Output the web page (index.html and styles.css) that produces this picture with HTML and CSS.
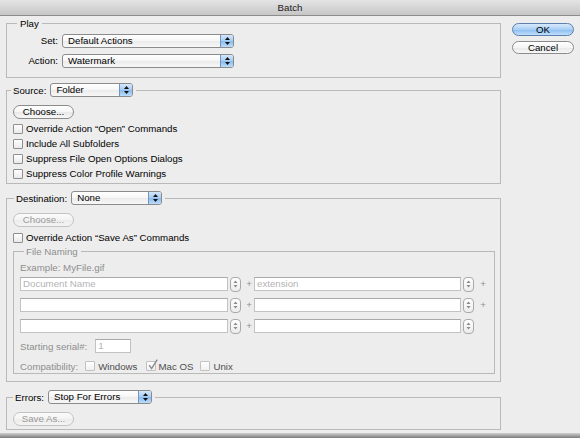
FILE: index.html
```html
<!DOCTYPE html>
<html>
<head>
<meta charset="utf-8">
<title>Batch</title>
<link rel="stylesheet" href="styles.css">
</head>
<body>
<div class="window">
  <div class="titlebar">Batch</div>
  <div class="content">
    <div class="main">
      <fieldset class="group group-play">
        <legend class="legend legend-play">Play</legend>
        <div class="form-grid">
          <span class="label">Set:</span>
          <div class="popup popup-play">
            <span class="popup-text">Default Actions</span>
            <span class="popup-arrows"><svg width="11" height="12" viewBox="0 0 11 12"><polygon points="3,5 8,5 5.5,2" fill="#111"/><polygon points="3,7 8,7 5.5,10" fill="#111"/></svg></span>
          </div>
          <span class="label">Action:</span>
          <div class="popup popup-play">
            <span class="popup-text">Watermark</span>
            <span class="popup-arrows"><svg width="11" height="12" viewBox="0 0 11 12"><polygon points="3,5 8,5 5.5,2" fill="#111"/><polygon points="3,7 8,7 5.5,10" fill="#111"/></svg></span>
          </div>
        </div>
      </fieldset>

      <fieldset class="group group-source">
        <legend class="legend legend-source">
          <div class="legend-row">
            <span>Source:</span>
            <div class="popup popup-source">
              <span class="popup-text">Folder</span>
              <span class="popup-arrows"><svg width="11" height="12" viewBox="0 0 11 12"><polygon points="3,5 8,5 5.5,2" fill="#111"/><polygon points="3,7 8,7 5.5,10" fill="#111"/></svg></span>
            </div>
          </div>
        </legend>
        <div class="btn btn-choose">Choose...</div>
        <div class="check-list">
          <div class="check-row"><span class="checkbox"></span><span>Override Action “Open” Commands</span></div>
          <div class="check-row"><span class="checkbox"></span><span>Include All Subfolders</span></div>
          <div class="check-row"><span class="checkbox"></span><span>Suppress File Open Options Dialogs</span></div>
          <div class="check-row"><span class="checkbox"></span><span>Suppress Color Profile Warnings</span></div>
        </div>
      </fieldset>

      <fieldset class="group group-dest">
        <legend class="legend legend-dest">
          <div class="legend-row">
            <span>Destination:</span>
            <div class="popup popup-dest">
              <span class="popup-text">None</span>
              <span class="popup-arrows"><svg width="11" height="12" viewBox="0 0 11 12"><polygon points="3,5 8,5 5.5,2" fill="#111"/><polygon points="3,7 8,7 5.5,10" fill="#111"/></svg></span>
            </div>
          </div>
        </legend>
        <div class="btn btn-choose btn-disabled">Choose...</div>
        <div class="check-row check-row-dest"><span class="checkbox"></span><span>Override Action “Save As” Commands</span></div>

        <fieldset class="group group-naming">
          <legend class="legend legend-naming">File Naming</legend>
          <div class="example">Example: MyFile.gif</div>
          <div class="naming-grid">
            <div class="field">Document Name</div>
            <div class="stepper"><svg width="9" height="12" viewBox="0 0 9 12"><polygon points="2.5,5 6.5,5 4.5,2.5" fill="#8a8a8a"/><polygon points="2.5,7 6.5,7 4.5,9.5" fill="#8a8a8a"/></svg></div>
            <div class="plus">+</div>
            <div class="field field-right">extension</div>
            <div class="stepper"><svg width="9" height="12" viewBox="0 0 9 12"><polygon points="2.5,5 6.5,5 4.5,2.5" fill="#8a8a8a"/><polygon points="2.5,7 6.5,7 4.5,9.5" fill="#8a8a8a"/></svg></div>
            <div class="plus plus-end">+</div>

            <div class="field"></div>
            <div class="stepper"><svg width="9" height="12" viewBox="0 0 9 12"><polygon points="2.5,5 6.5,5 4.5,2.5" fill="#8a8a8a"/><polygon points="2.5,7 6.5,7 4.5,9.5" fill="#8a8a8a"/></svg></div>
            <div class="plus">+</div>
            <div class="field field-right"></div>
            <div class="stepper"><svg width="9" height="12" viewBox="0 0 9 12"><polygon points="2.5,5 6.5,5 4.5,2.5" fill="#8a8a8a"/><polygon points="2.5,7 6.5,7 4.5,9.5" fill="#8a8a8a"/></svg></div>
            <div class="plus plus-end">+</div>

            <div class="field"></div>
            <div class="stepper"><svg width="9" height="12" viewBox="0 0 9 12"><polygon points="2.5,5 6.5,5 4.5,2.5" fill="#8a8a8a"/><polygon points="2.5,7 6.5,7 4.5,9.5" fill="#8a8a8a"/></svg></div>
            <div class="plus">+</div>
            <div class="field field-right"></div>
            <div class="stepper"><svg width="9" height="12" viewBox="0 0 9 12"><polygon points="2.5,5 6.5,5 4.5,2.5" fill="#8a8a8a"/><polygon points="2.5,7 6.5,7 4.5,9.5" fill="#8a8a8a"/></svg></div>
            <div class="plus plus-end"></div>
          </div>
          <div class="serial-row">
            <span class="dim">Starting serial#:</span>
            <div class="field field-serial">1</div>
          </div>
          <div class="compat-row">
            <span class="dim">Compatibility:</span>
            <div class="compat-opt"><span class="checkbox checkbox-disabled"></span><span>Windows</span></div>
            <div class="compat-opt compat-mac"><span class="checkbox checkbox-disabled checkbox-checked"><svg class="checkmark" width="12" height="12" viewBox="0 0 12 12"><path d="M2.2 6.2 L4.6 9.6 L10.2 0.6" fill="none" stroke="#8a8a8a" stroke-width="1.4"/></svg></span><span>Mac OS</span></div>
            <div class="compat-opt"><span class="checkbox checkbox-disabled"></span><span>Unix</span></div>
          </div>
        </fieldset>
      </fieldset>

      <fieldset class="group group-errors">
        <legend class="legend legend-errors">
          <div class="legend-row">
            <span>Errors:</span>
            <div class="popup popup-errors">
              <span class="popup-text">Stop For Errors</span>
              <span class="popup-arrows"><svg width="11" height="12" viewBox="0 0 11 12"><polygon points="3,5 8,5 5.5,2" fill="#111"/><polygon points="3,7 8,7 5.5,10" fill="#111"/></svg></span>
            </div>
          </div>
        </legend>
        <div class="btn btn-choose btn-disabled">Save As...</div>
      </fieldset>
    </div>

    <div class="side">
      <div class="btn btn-side btn-default">OK</div>
      <div class="btn btn-side">Cancel</div>
    </div>
  </div>
  <div class="bottom-edge"></div>
</div>
</body>
</html>
```

FILE: styles.css
```css
* { box-sizing: border-box; }
html, body { margin: 0; padding: 0; }
body {
  width: 580px;
  height: 438px;
  overflow: hidden;
  background: #ededed;
  font-family: "Liberation Sans", Arial, sans-serif;
  font-size: 9.7px;
  color: #000;
}
.window { display: flex; flex-direction: column; height: 438px; }
.titlebar {
  height: 16px;
  line-height: 15px;
  text-align: center;
  background: linear-gradient(#e4e4e4, #c6c6c6);
  border-bottom: 1px solid #8c8c8c;
  color: #1a1a1a;
}
.content { flex: 1; display: flex; gap: 11px; padding-left: 6px; }
.main { width: 495px; display: flex; flex-direction: column; }
.side { width: 62px; display: flex; flex-direction: column; gap: 5px; padding-top: 7px; }

.group {
  margin: 0;
  border: 1px solid #b9b9b9;
  padding: 0;
  min-width: 0;
}
.legend { padding: 0 2px; }
.legend-row { display: flex; align-items: center; gap: 4px; height: 14px; }

.group-play { margin-top: 1px; padding: 4px 0 9px 0; }
.legend-play { margin-left: 10px; padding: 0 3px; line-height: 13px; }
.form-grid {
  display: grid;
  grid-template-columns: 51px 172px;
  column-gap: 4px;
  row-gap: 6px;
  align-items: center;
}
.label { text-align: right; line-height: 14px; }

.group-source { margin-top: 5px; padding: 8px 5px 2px 6px; }
.legend-source { margin-left: -2px; padding: 0 3px 0 2px; }
.group-dest { margin-top: 7px; padding: 8px 5px 7px 6px; }
.legend-dest { margin-left: 1px; padding: 0 3px 0 2px; }
.group-errors { margin-top: 8px; padding: 8px 5px 3px 6px; }
.legend-errors { margin-left: 0; padding: 0 3px 0 2px; }

.popup {
  display: flex;
  height: 14px;
  border: 1px solid #8b8b8b;
  border-radius: 3px;
  background: linear-gradient(#ffffff, #f6f6f6 50%, #ebebeb 51%, #f7f7f7);
  overflow: hidden;
}
.popup-play { width: 172px; }
.popup-source { width: 83px; }
.popup-dest { width: 91px; }
.popup-errors { width: 104px; }
.popup-text { flex: 1; padding-left: 5px; line-height: 12px; white-space: nowrap; }
.popup-arrows {
  width: 13px;
  border-left: 1px solid #7494c0;
  background: linear-gradient(#d4e7fb, #a6ccf4 50%, #87bbef 51%, #bcdcfb);
  display: flex;
  align-items: center;
  justify-content: center;
}
.popup-arrows svg { display: block; }

.btn {
  height: 14px;
  border: 1px solid #8b8b8b;
  border-radius: 7px;
  background: linear-gradient(#ffffff, #f5f5f5 50%, #e8e8e8 51%, #f7f7f7);
  text-align: center;
  line-height: 12px;
  white-space: nowrap;
}
.btn-choose { width: 61px; }
.btn-disabled { border-color: #c3c3c3; color: #9a9a9a; background: linear-gradient(#fbfbfb, #f3f3f3 50%, #ececec 51%, #f4f4f4); }
.btn-side { width: 62px; height: 13px; line-height: 11px; }
.btn-default {
  border-color: #5d80ae;
  background: linear-gradient(#d8eafc, #a9cef5 50%, #8abdf0 51%, #bfdefc);
}

.check-list { margin-top: 2px; display: flex; flex-direction: column; }
.check-row { display: flex; align-items: center; gap: 3px; height: 15px; }
.check-row-dest { margin-top: 3px; }
.checkbox {
  width: 10px;
  height: 10px;
  flex-shrink: 0;
  border: 1px solid #8f8f8f;
  border-radius: 1px;
  background: linear-gradient(#ffffff, #e9e9e9);
}
.checkbox-disabled { border-color: #c2c2c2; background: linear-gradient(#ffffff, #f0f0f0); }
.checkbox-checked { position: relative; }
.checkmark { position: absolute; left: 0; top: -3px; overflow: visible; }

.group-naming { margin-top: 0; padding: 3px 4px 0 6px; color: #8e8e8e; }
.legend-naming { margin-left: 4px; padding: 0 3px 0 2px; line-height: 13px; }
.example { line-height: 14px; margin-bottom: 2px; }
.naming-grid {
  display: grid;
  grid-template-columns: 210px 11px 13px 209px 12px 12px;
  grid-auto-rows: 14px;
  row-gap: 7px;
  align-items: center;
}
.field {
  width: 208px;
  height: 14px;
  background: #fff;
  border: 1px solid #c2c2c2;
  border-top-color: #a9a9a9;
  padding-left: 2px;
  line-height: 12px;
  color: #b3b3b3;
  white-space: nowrap;
}
.field-right { width: 207px; }
.stepper {
  width: 11px;
  height: 15px;
  border: 1px solid #a9a9a9;
  border-radius: 4px;
  background: linear-gradient(#ffffff, #ececec);
  display: flex;
  align-items: center;
  justify-content: center;
}
.stepper svg { display: block; }
.plus { text-align: center; padding-left: 3px; color: #8e8e8e; line-height: 14px; }
.plus-end { padding-left: 4px; }

.serial-row { margin-top: 6px; display: flex; align-items: center; gap: 8px; height: 14px; }
.field-serial { width: 36px; }
.compat-row { margin-top: 6px; display: flex; align-items: center; gap: 7px; height: 14px; }
.compat-opt { display: flex; align-items: center; gap: 3px; color: #4d4d4d; }
.compat-mac { margin-left: 2px; gap: 2px; }
.dim { color: #8e8e8e; }

.bottom-edge { height: 5px; background: linear-gradient(#cfcfcf, #7c7c7c); }
```
